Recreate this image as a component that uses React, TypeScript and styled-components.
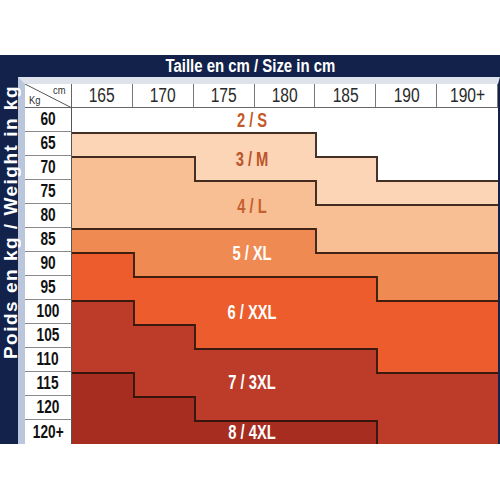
import styled, { createGlobalStyle } from "styled-components";

const NAVY = "#13224a";
const SANS = `"Liberation Sans", Arial, sans-serif`;

const GlobalStyle = createGlobalStyle`
  body {
    margin: 0;
    background: #fff;
    font-family: ${SANS};
  }
`;

const heightsCm = ["165", "170", "175", "180", "185", "190", "190+"];
const weightsKg = ["60", "65", "70", "75", "80", "85", "90", "95", "100", "105", "110", "115", "120", "120+"];

const sizes = [
  { name: "2 / S", color: "#ffffff", text: "#c45a2a", y: 36 },
  { name: "3 / M", color: "#fbd5b6", text: "#bb552b", y: 75 },
  { name: "4 / L", color: "#f8be94", text: "#c4602f", y: 122 },
  { name: "5 / XL", color: "#f08a53", text: "#ffffff", y: 169 },
  { name: "6 / XXL", color: "#ec5c2c", text: "#ffffff", y: 228 },
  { name: "7 / 3XL", color: "#bd3b29", text: "#ffffff", y: 298 },
  { name: "8 / 4XL", color: "#a62d20", text: "#ffffff", y: 348 },
];

// size index for every weight row / height column
const grid = [
  [0, 0, 0, 0, 0, 0, 0],
  [1, 1, 1, 1, 0, 0, 0],
  [2, 2, 1, 1, 1, 0, 0],
  [2, 2, 2, 2, 1, 1, 1],
  [2, 2, 2, 2, 2, 2, 2],
  [3, 3, 3, 3, 2, 2, 2],
  [4, 3, 3, 3, 3, 3, 3],
  [4, 4, 4, 4, 4, 3, 3],
  [5, 4, 4, 4, 4, 4, 4],
  [5, 5, 4, 4, 4, 4, 4],
  [5, 5, 5, 5, 5, 4, 4],
  [6, 5, 5, 5, 5, 5, 5],
  [6, 6, 5, 5, 5, 5, 5],
  [6, 6, 6, 6, 6, 5, 5],
];

const App = () => {
  return (
    <>
      <GlobalStyle />
      <Chart>
        <Title>
          <Squeeze $x={0.83}>Taille en cm / Size in cm</Squeeze>
        </Title>
        <SideLabel>
          <span>Poids en kg / Weight in kg</span>
        </SideLabel>
        <Panel>
          <Table>
            <Corner>
              <svg width="47" height="24" viewBox="0 0 47 24">
                <line x1="0" y1="0" x2="47" y2="24" stroke="#555" strokeWidth="1" />
              </svg>
              <CornerCm>cm</CornerCm>
              <CornerKg>Kg</CornerKg>
            </Corner>
            {heightsCm.map((h) => (
              <HeadCell key={h}>
                <Squeeze $x={0.78}>{h}</Squeeze>
              </HeadCell>
            ))}
            {weightsKg.map((w, r) => (
              <Row key={w}>
                <KgCell $last={r === weightsKg.length - 1}>
                  <Squeeze $x={0.76}>{w}</Squeeze>
                </KgCell>
                {grid[r].map((s, c) => {
                  const top = r > 0 && grid[r - 1][c] !== s;
                  const left = c > 0 && grid[r][c - 1] !== s;
                  return <SizeCell key={c} $bg={sizes[s].color} $top={top} $left={left} />;
                })}
              </Row>
            ))}
            {sizes.map((s) => (
              <SizeLabel key={s.name} $color={s.text} $y={s.y}>
                {s.name}
              </SizeLabel>
            ))}
          </Table>
        </Panel>
      </Chart>
    </>
  );
};

export default App;

const Chart = styled.div`
  margin-top: 55px;
  width: 500px;
  display: grid;
  grid-template-columns: 18px 1fr;
  grid-template-rows: 22px auto;
  background: ${NAVY};
`;

// narrow type: the chart uses a condensed face we don't have
const Squeeze = styled.span<{ $x: number }>`
  display: inline-block;
  white-space: nowrap;
  transform: scaleX(${({ $x }) => $x});
`;

const Title = styled.div`
  grid-column: 1 / -1;
  display: flex;
  align-items: center;
  justify-content: center;
  color: #fff;
  font-weight: bold;
  font-size: 18px;
`;

const SideLabel = styled.div`
  display: flex;
  flex-direction: column;
  align-items: flex-start;
  padding-top: 8px;

  > span {
    writing-mode: vertical-rl;
    transform: rotate(180deg);
    color: #fff;
    font-weight: bold;
    font-size: 19px;
    line-height: 21px;
    letter-spacing: 1.5px;
    white-space: nowrap;
  }
`;

const Panel = styled.div`
  border-top: 7px solid #dee2ea;
  border-left: 7px solid #bac6dc;
  border-right: 2px solid ${NAVY};
`;

const Table = styled.div`
  position: relative;
  display: grid;
  grid-template-columns: 47px repeat(7, 1fr);
  grid-template-rows: repeat(15, 24px);
  background: #fff;
`;

const Row = styled.div`
  display: contents;
`;

const Corner = styled.div`
  position: relative;
  border-bottom: 1px solid #666;
  border-right: 1px solid #666;
  font-size: 11px;
  color: #333;

  svg {
    position: absolute;
    inset: 0;
  }
`;

const CornerCm = styled.span`
  position: absolute;
  right: 4px;
  top: 0;
  transform: scaleX(0.85);
`;

const CornerKg = styled.span`
  position: absolute;
  left: 3px;
  bottom: 1px;
  transform: scaleX(0.85);
`;

const HeadCell = styled.div`
  display: flex;
  align-items: center;
  justify-content: center;
  border-bottom: 1px solid #666;
  border-right: 1px solid #777;
  font-size: 20px;
  color: #2a2a2a;

  &:last-of-type {
    border-right: none;
  }
`;

const KgCell = styled.div<{ $last: boolean }>`
  display: flex;
  align-items: center;
  justify-content: center;
  border-bottom: ${({ $last }) => ($last ? "none" : "1px solid #8a8a8a")};
  border-right: 1px solid #555;
  font-weight: bold;
  font-size: 18px;
  color: #111;
`;

const SizeCell = styled.div<{ $bg: string; $top: boolean; $left: boolean }>`
  background: ${({ $bg }) => $bg};
  box-shadow: ${({ $top, $left }) =>
    [$top ? "inset 0 2px 0 rgba(35, 18, 10, 0.85)" : "", $left ? "inset 2px 0 0 rgba(35, 18, 10, 0.85)" : ""]
      .filter(Boolean)
      .join(", ") || "none"};
`;

const SizeLabel = styled.div<{ $color: string; $y: number }>`
  position: absolute;
  left: 227px;
  top: ${({ $y }) => $y}px;
  transform: translate(-50%, -50%) scaleX(0.7);
  color: ${({ $color }) => $color};
  font-weight: bold;
  font-size: 21px;
  white-space: nowrap;
`;
